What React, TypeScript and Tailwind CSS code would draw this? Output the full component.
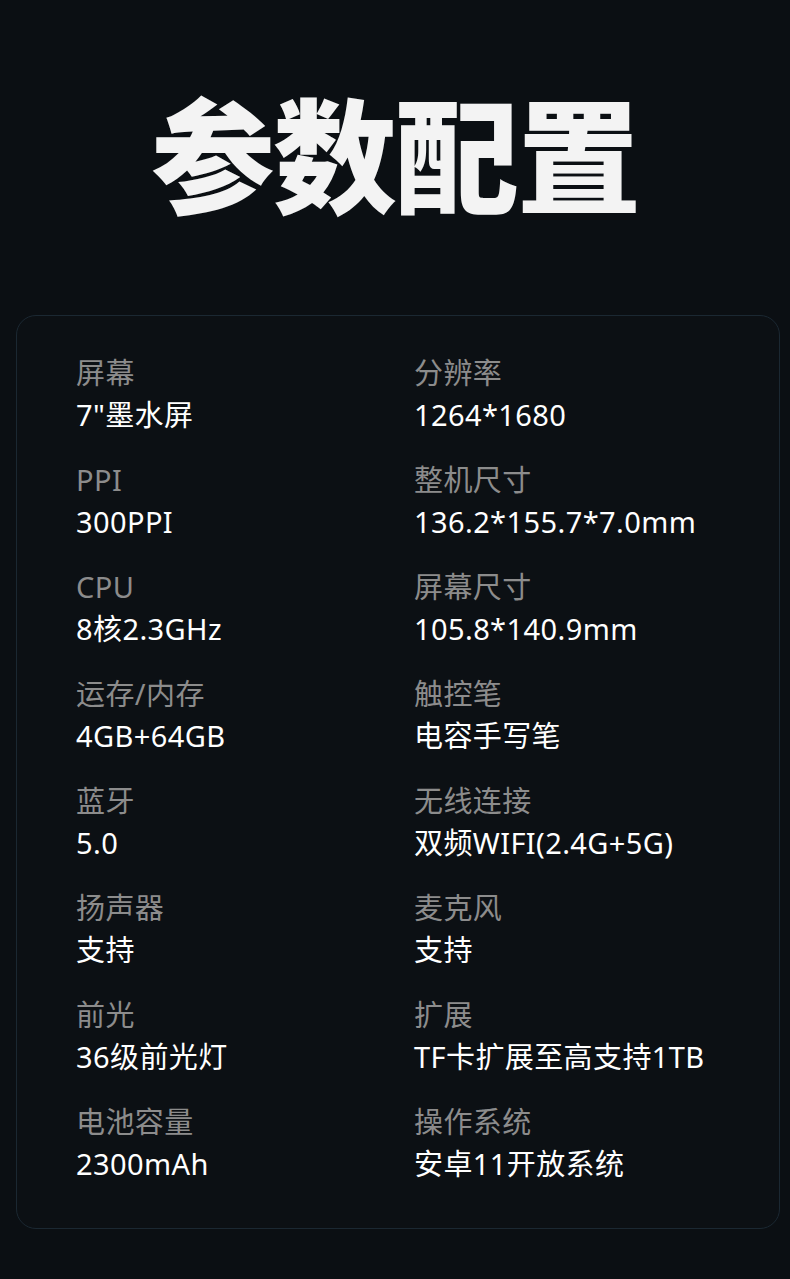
const specs: [string, string][] = [
  ['屏幕', '7"墨水屏'],
  ['分辨率', '1264*1680'],
  ['PPI', '300PPI'],
  ['整机尺寸', '136.2*155.7*7.0mm'],
  ['CPU', '8核2.3GHz'],
  ['屏幕尺寸', '105.8*140.9mm'],
  ['运存/内存', '4GB+64GB'],
  ['触控笔', '电容手写笔'],
  ['蓝牙', '5.0'],
  ['无线连接', '双频WIFI(2.4G+5G)'],
  ['扬声器', '支持'],
  ['麦克风', '支持'],
  ['前光', '36级前光灯'],
  ['扩展', 'TF卡扩展至高支持1TB'],
  ['电池容量', '2300mAh'],
  ['操作系统', '安卓11开放系统'],
];

export default function App() {
  return (
    <div
      className="w-[790px] h-[1279px] bg-[#0b0f13] overflow-hidden"
      style={{ fontFamily: '"Noto Sans", "Noto Sans CJK SC", sans-serif' }}
    >
      <h1
        className="pt-[75px] h-[315px] text-center text-[124px] leading-[150px] font-black text-[#f3f3f3] tracking-[-2px]"
        style={{ fontFamily: '"Noto Sans CJK SC", sans-serif' }}
      >
        参数配置
      </h1>
      <div className="mx-[16px] w-[764px] h-[914px] rounded-[20px] border border-[#1b2832] bg-[#0c1014] pt-[36px] pl-[59px]">
        <div className="grid grid-cols-[338px_1fr] gap-y-[23px]">
          {specs.map(([label, value]) => (
            <div key={label} className="flex flex-col tracking-[0.4px]">
              <span className="text-[29px] leading-[42px] text-[#8c8c8c]">{label}</span>
              <span className="text-[29px] leading-[42px] text-white">{value}</span>
            </div>
          ))}
        </div>
      </div>
    </div>
  );
}
